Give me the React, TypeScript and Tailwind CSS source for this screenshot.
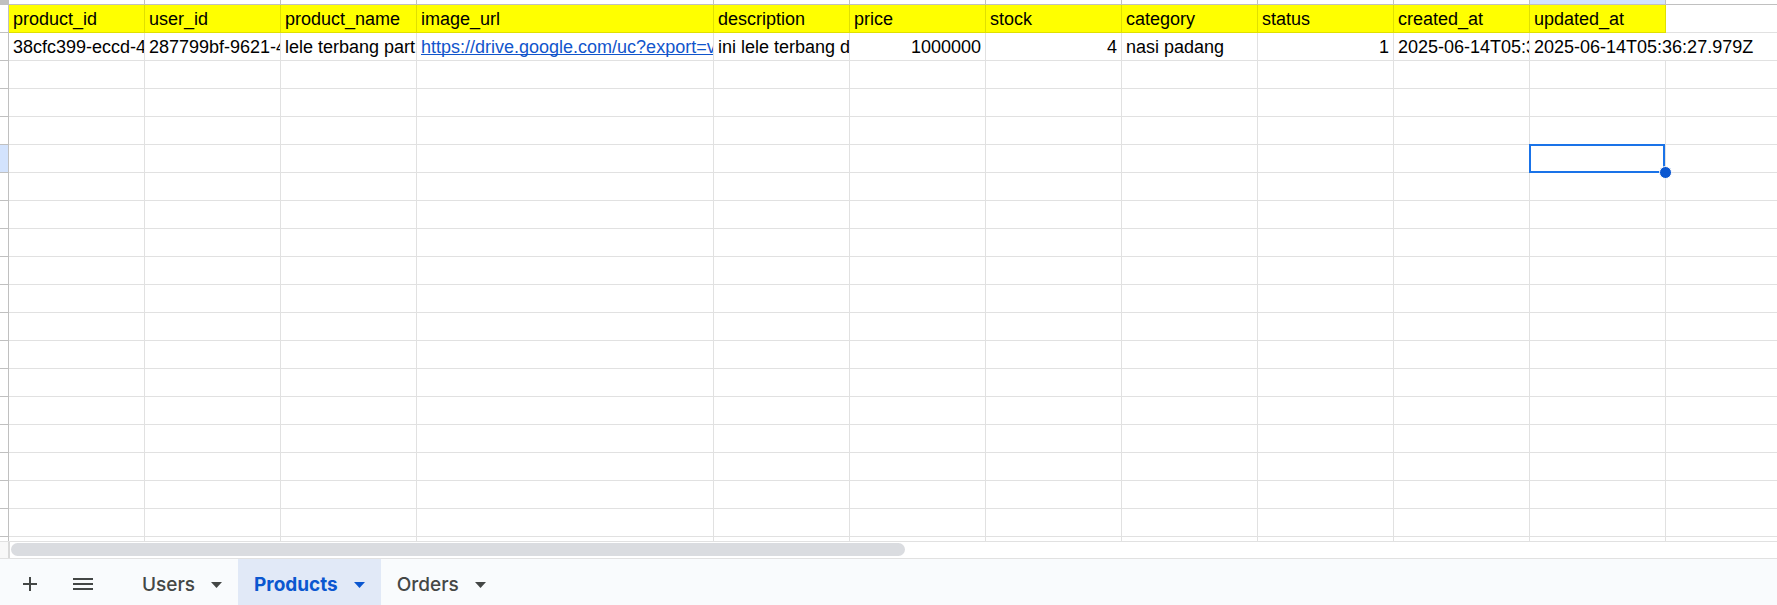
import React from "react";
import clsx from "clsx";

type Align = "left" | "right";

interface Column {
  name: string;
  value: string;
  align?: Align;
  width: string;
}

const columns: Column[] = [
  { name: "product_id", value: "38cfc399-eccd-4", width: "w-[136px]" },
  { name: "user_id", value: "287799bf-9621-4", width: "w-[136px]" },
  { name: "product_name", value: "lele terbang part", width: "w-[136px]" },
  { name: "image_url", value: "https://drive.google.com/uc?export=v", width: "w-[297px]" },
  { name: "description", value: "ini lele terbang d", width: "w-[136px]" },
  { name: "price", value: "1000000", align: "right", width: "w-[136px]" },
  { name: "stock", value: "4", align: "right", width: "w-[136px]" },
  { name: "category", value: "nasi padang", width: "w-[136px]" },
  { name: "status", value: "1", align: "right", width: "w-[136px]" },
  { name: "created_at", value: "2025-06-14T05:3", width: "w-[136px]" },
  { name: "updated_at", value: "2025-06-14T05:36:27.979Z", width: "w-[136px]" },
];

const emptyRows = Array.from({ length: 40 }, (_, i) => i + 3);
const selected = { row: 6, column: "updated_at" };

function RowHeader({ active = false }: { active?: boolean }) {
  return (
    <td className={clsx("border-r border-b border-[#c0c0c0] p-0", active ? "bg-[#d3e3fd]" : "bg-white")} />
  );
}

function Selection() {
  return (
    <>
      <div className="absolute -top-px right-0 -bottom-px -left-px border-2 border-[#1a73e8]" />
      <div className="absolute -right-[7px] -bottom-[7px] z-10 size-[13px] rounded-full border border-white bg-[#0b57d0]" />
    </>
  );
}

function Grid() {
  return (
    <table className="w-full table-fixed border-separate border-spacing-0 text-[18px] leading-5 text-black">
      <colgroup>
        <col className="w-[9px]" />
        {columns.map((c) => (
          <col key={c.name} className={c.width} />
        ))}
        <col />
      </colgroup>
      <tbody>
        <tr className="h-[5px]">
          <td className="border-r border-b border-[#c0c0c0] bg-[#c0c0c0] p-0" />
          {columns.map((c) => (
            <td
              key={c.name}
              className={clsx(
                "border-r border-b border-[#c0c0c0] p-0",
                c.name === selected.column ? "bg-[#d3e3fd]" : "bg-white",
              )}
            />
          ))}
          <td className="border-b border-[#c0c0c0] p-0" />
        </tr>
        <tr className="h-7">
          <RowHeader />
          {columns.map((c) => (
            <th
              key={c.name}
              scope="col"
              className="border-r border-b border-[#e0e000] bg-[#ffff00] px-1 py-0 text-left font-normal whitespace-nowrap"
            >
              {c.name}
            </th>
          ))}
          <td className="border-b border-[#e1e1e1] p-0" />
        </tr>
        <tr className="h-7">
          <RowHeader />
          {columns.map((c) => (
            <td
              key={c.name}
              className={clsx(
                "border-b border-[#e1e1e1] py-0 pl-1 whitespace-nowrap",
                c.align === "right" ? "pr-1 text-right" : "text-left",
                c.name === "updated_at" ? "overflow-visible" : "overflow-hidden border-r",
              )}
            >
              {c.name === "image_url" ? (
                <a
                  href="https://drive.google.com/uc?export=v"
                  className="text-[#1155cc] underline [text-decoration-skip-ink:none]"
                >
                  {c.value}
                </a>
              ) : (
                c.value
              )}
            </td>
          ))}
          <td className="border-b border-[#e1e1e1] p-0" />
        </tr>
        {emptyRows.map((row) => (
          <tr key={row} className="h-7">
            <RowHeader active={row === selected.row} />
            {columns.map((c) => (
              <td key={c.name} className="relative border-r border-b border-[#e1e1e1] p-0">
                {row === selected.row && c.name === selected.column && <Selection />}
              </td>
            ))}
            <td className="border-b border-[#e1e1e1] p-0" />
          </tr>
        ))}
      </tbody>
    </table>
  );
}

function Tab({ label, active = false }: { label: string; active?: boolean }) {
  return (
    <button
      type="button"
      aria-pressed={active}
      className={clsx(
        "flex items-center gap-4 px-4 pt-1.5 text-[19px]",
        active ? "bg-[#e1e9f7] font-bold text-[#0b57d0]" : "font-medium text-[#444746]",
      )}
    >
      {label}
      <svg viewBox="0 0 11 6" className="h-1.5 w-[11px] fill-current" aria-hidden="true">
        <path d="M0 0h11L5.5 6z" />
      </svg>
    </button>
  );
}

export default function App() {
  return (
    <div className="flex h-screen flex-col overflow-hidden bg-white font-['Liberation_Sans',Arial,sans-serif]">
      <main className="min-h-0 flex-1 overflow-hidden">
        <Grid />
      </main>
      <div className="flex h-[18px] shrink-0 border-y border-[#e1e1e1]">
        <div className="w-[10px] border-r-2 border-[#d9d9d9] bg-[#f8f8f8]" />
        <div className="flex-1 py-px pl-px">
          <div className="h-[13px] w-[50.6%] rounded-full bg-[#dadce0]" />
        </div>
      </div>
      <nav
        aria-label="Sheets"
        className="flex h-[46px] shrink-0 bg-[#f9fbfd] font-[Inter,sans-serif] text-[#444746]"
      >
        <button type="button" aria-label="Add sheet" className="flex w-[60px] items-center justify-center pt-1">
          <svg viewBox="0 0 14 14" className="size-3.5 fill-current" aria-hidden="true">
            <path d="M6 0h2v6h6v2H8v6H6V8H0V6h6z" />
          </svg>
        </button>
        <button type="button" aria-label="All sheets" className="flex w-[46px] items-center justify-center pt-1">
          <svg viewBox="0 0 20 14" className="h-3.5 w-5 fill-current" aria-hidden="true">
            <path d="M0 1h20v2H0zM0 6h20v2H0zM0 11h20v2H0z" />
          </svg>
        </button>
        <div className="ml-5 flex">
          <Tab label="Users" />
          <Tab label="Products" active />
          <Tab label="Orders" />
        </div>
      </nav>
    </div>
  );
}
